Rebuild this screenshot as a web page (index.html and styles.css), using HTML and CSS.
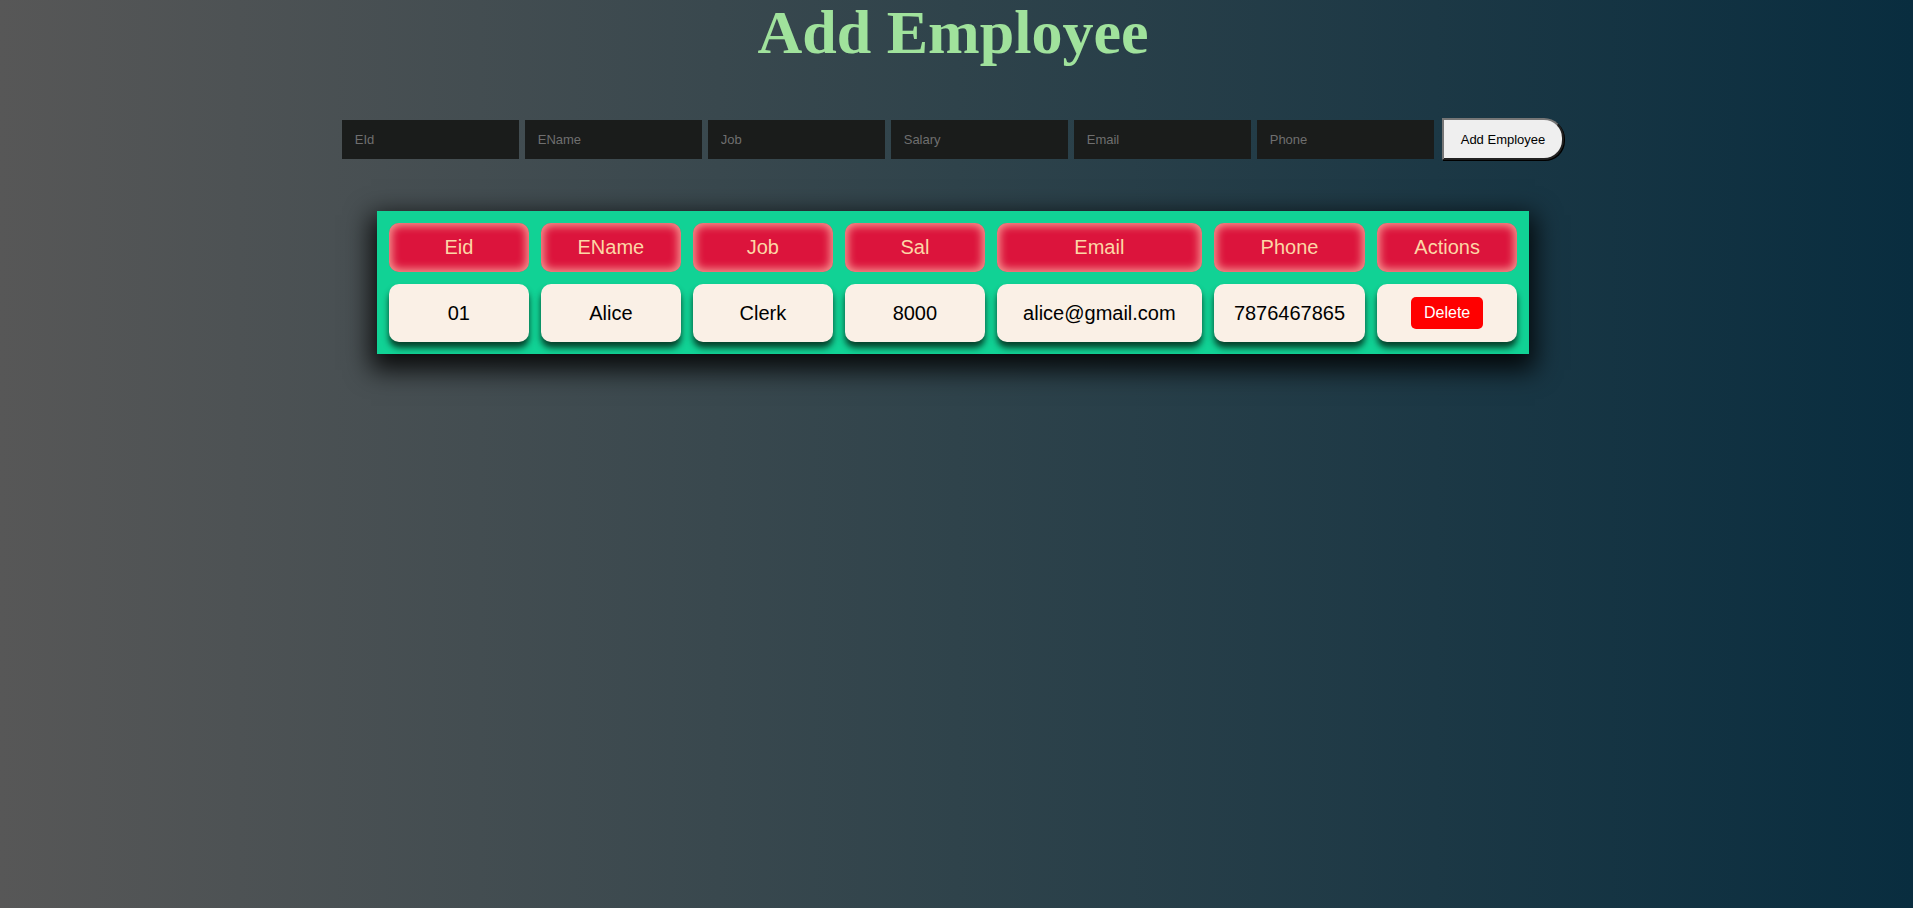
FILE: index.html
```html
<!DOCTYPE html>
<html lang="en">
<head>
<meta charset="utf-8">
<title>Add Employee</title>
<link rel="stylesheet" href="styles.css">
</head>
<body>
<main class="page">
  <h1 class="title">Add Employee</h1>
  <form class="emp-form">
    <input class="field" type="text" placeholder="EId">
    <input class="field" type="text" placeholder="EName">
    <input class="field" type="text" placeholder="Job">
    <input class="field" type="text" placeholder="Salary">
    <input class="field" type="text" placeholder="Email">
    <input class="field" type="text" placeholder="Phone">
    <button class="add-btn" type="button">Add Employee</button>
  </form>
  <table class="emp-table">
    <thead>
      <tr>
        <th>Eid</th>
        <th>EName</th>
        <th>Job</th>
        <th>Sal</th>
        <th class="col-email">Email</th>
        <th>Phone</th>
        <th>Actions</th>
      </tr>
    </thead>
    <tbody>
      <tr>
        <td>01</td>
        <td>Alice</td>
        <td>Clerk</td>
        <td>8000</td>
        <td class="col-email">alice@gmail.com</td>
        <td>7876467865</td>
        <td><button class="del-btn" type="button">Delete</button></td>
      </tr>
    </tbody>
  </table>
</main>
</body>
</html>
```
FILE: styles.css
```css
html, body {
  margin: 0;
  padding: 0;
  height: 100%;
}

body {
  background: linear-gradient(to right, #575757 0%, #2f434b 50%, #092d3f 100%);
  min-height: 908px;
}

.page {
  margin-right: 7px;
  display: flex;
  flex-direction: column;
  align-items: center;
}

.title {
  margin: 1px 0 0;
  font-family: "Liberation Serif", "Times New Roman", serif;
  font-weight: bold;
  font-size: 62px;
  line-height: 1;
  color: #a0e29c;
}

.emp-form {
  margin-top: 55px;
  display: flex;
  align-items: center;
  gap: 6px;
}

.field {
  box-sizing: border-box;
  width: 177px;
  height: 39px;
  padding: 0 13px;
  border: none;
  outline: none;
  background: #1a1c1b;
  color: #cccccc;
  font-family: "Liberation Sans", Arial, sans-serif;
  font-size: 13px;
}

.field::placeholder {
  color: #6f6f6f;
}

.add-btn {
  box-sizing: border-box;
  margin-left: 2px;
  height: 42px;
  padding: 0 17px;
  border: 2px outset #767676;
  border-radius: 0 20px 20px 0;
  box-shadow: 1px 1px 0 #000;
  background: #efefef;
  color: #000;
  font-family: "Liberation Sans", Arial, sans-serif;
  font-size: 13px;
}

.emp-table {
  margin-top: 51px;
  border-collapse: separate;
  border-spacing: 12px;
  background: #11d295;
  box-shadow: 0 10px 24px 6px rgba(0, 0, 0, 0.85);
  font-family: "Liberation Sans", Arial, sans-serif;
  font-size: 20px;
}

.emp-table th,
.emp-table td {
  box-sizing: content-box;
  width: 100px;
  padding: 0 20px;
  text-align: center;
  border-radius: 10px;
}

.emp-table th {
  height: 49px;
  font-weight: normal;
  background: #dc143c;
  color: #fdd6a6;
  box-shadow: inset 0 0 8px 3px rgba(255, 205, 180, 0.7);
}

.emp-table td {
  height: 58px;
  background: #faf0e6;
  color: #000;
  box-shadow: 0 6px 6px rgba(0, 20, 10, 0.75);
}

.emp-table .col-email {
  width: 165px;
}

.del-btn {
  box-sizing: border-box;
  height: 32px;
  padding: 0 13px;
  border: none;
  border-radius: 5px;
  background: #ff0000;
  color: #ffffff;
  font-family: "Liberation Sans", Arial, sans-serif;
  font-size: 16px;
  vertical-align: middle;
}
```
